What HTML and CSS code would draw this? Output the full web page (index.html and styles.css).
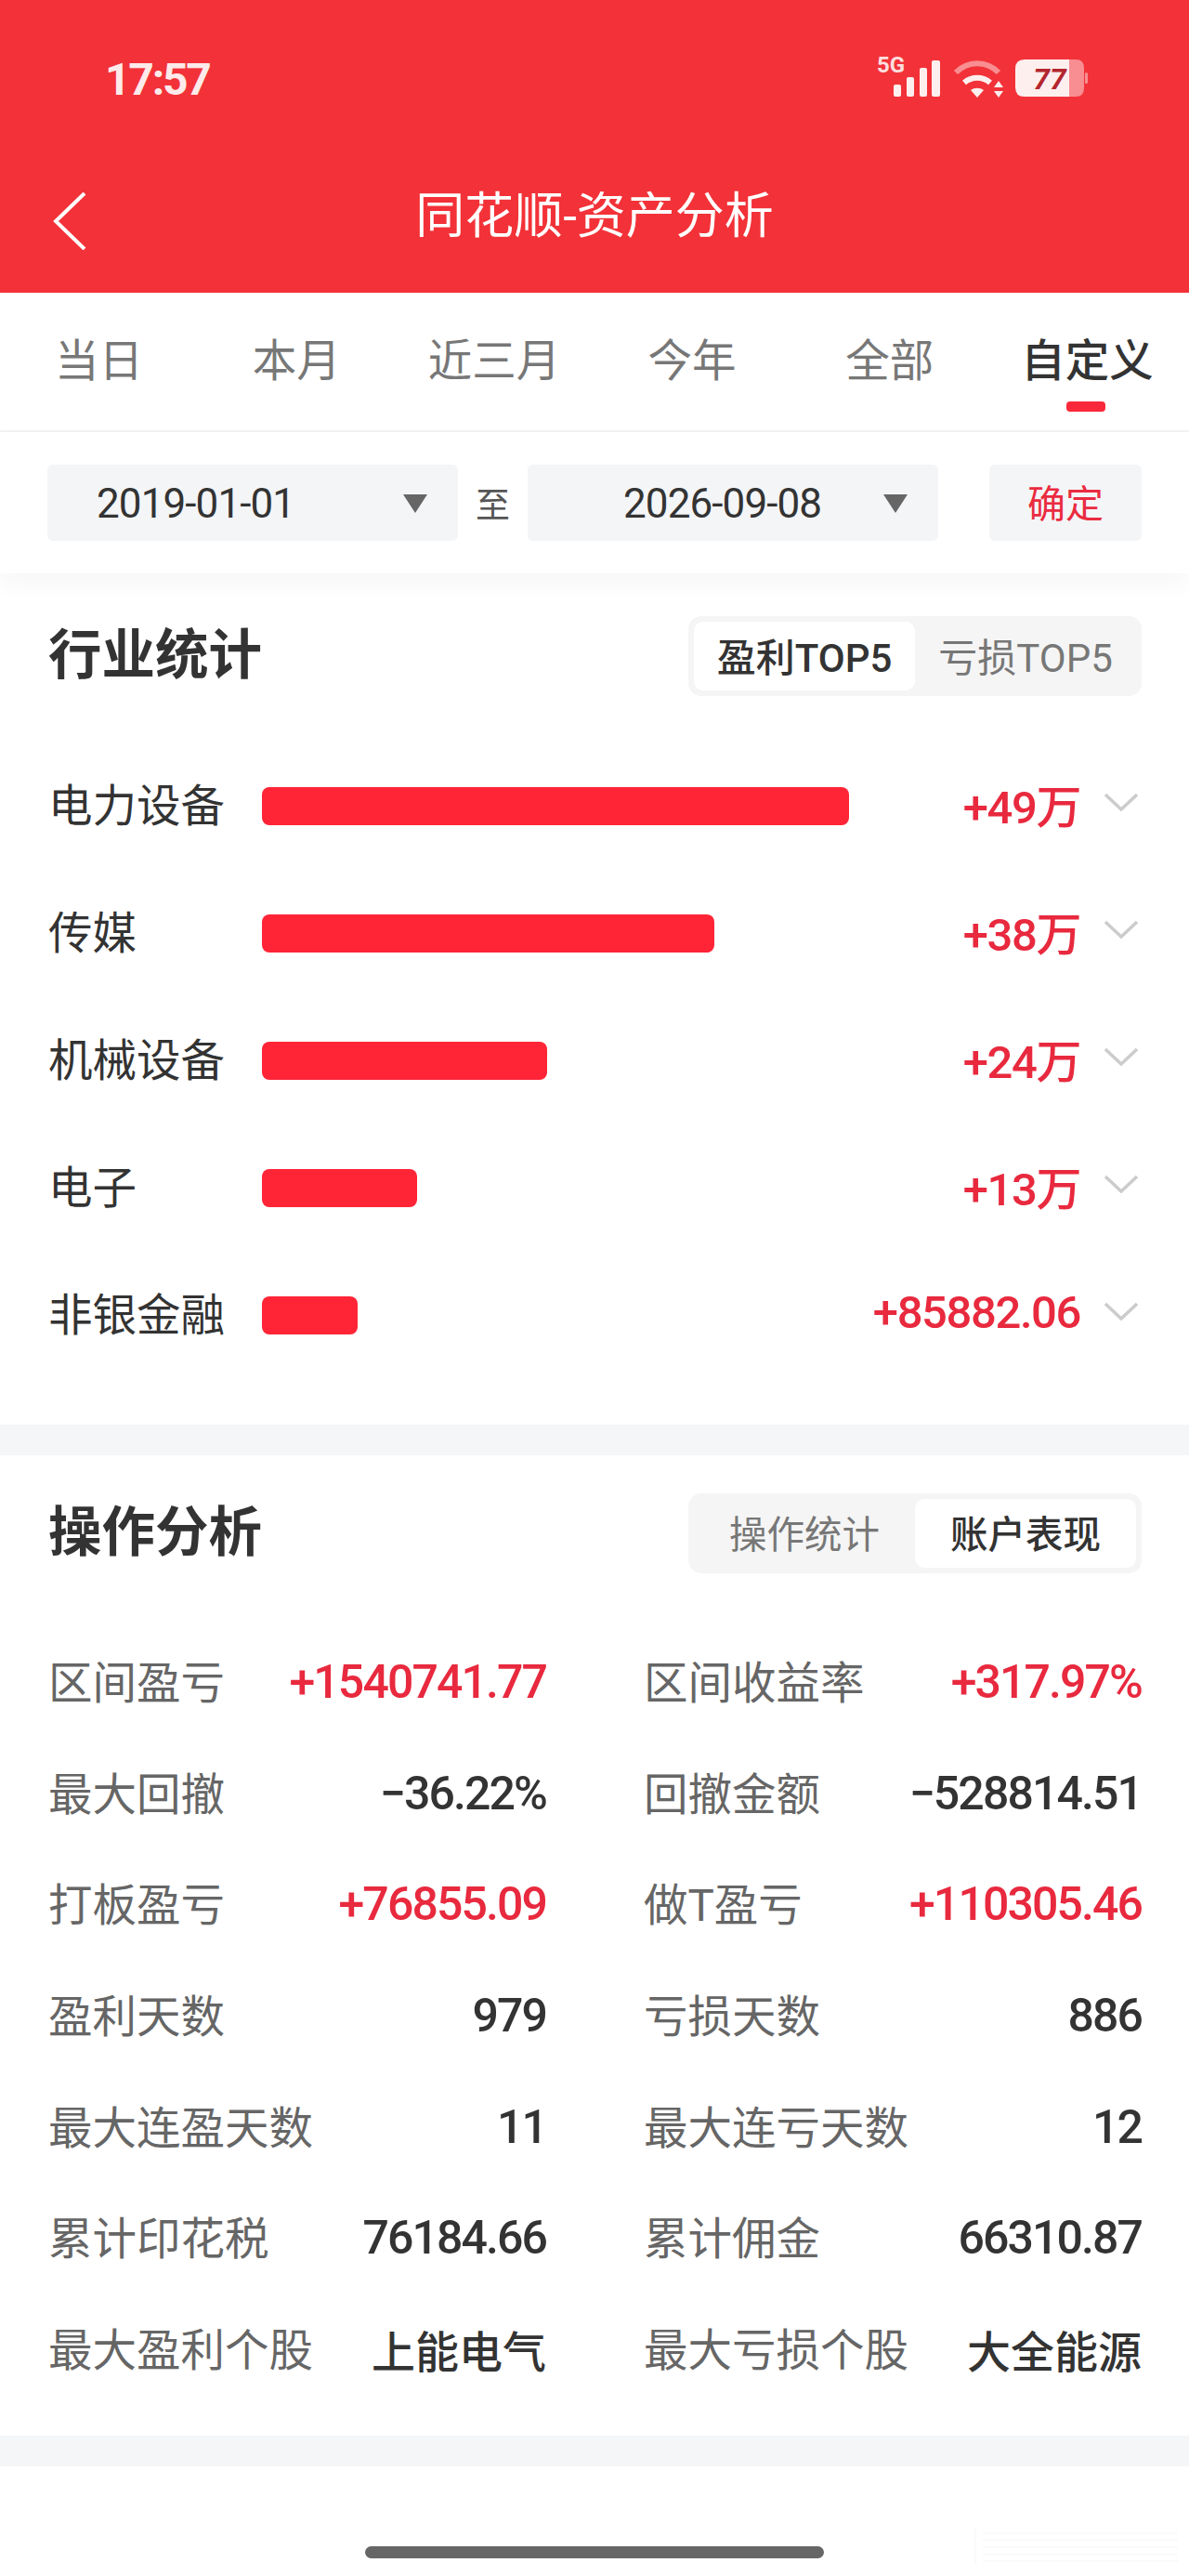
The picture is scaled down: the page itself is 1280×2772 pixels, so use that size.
FILE: index.html
```html
<!DOCTYPE html>
<html>
<head>
  <meta charset="UTF-8">
  <title>同花顺-资产分析</title>
  <link rel="stylesheet" href="styles.css">
</head>
<body>
  <header class="top">
    <div class="status">
      <span class="time">17:57</span>
      <svg class="status-icons" width="232" height="60" viewBox="0 -5 232 60">
        <text x="4" y="18" class="net">5G</text>
        <rect x="22" y="31" width="8" height="13" rx="2" fill="#fff" opacity=".92"/>
        <rect x="36" y="23" width="8" height="21" rx="2" fill="#fff" opacity=".92"/>
        <rect x="50" y="13" width="8" height="31" rx="2" fill="#fff" opacity=".92"/>
        <rect x="63" y="5" width="9" height="39" rx="2" fill="#fff" opacity=".92"/>
        <path d="M89 18 C102 5 122 5 135 18" fill="none" stroke="#fff" stroke-opacity=".45" stroke-width="6"/>
        <path d="M98 29 C106 22 118 22 126 29" fill="none" stroke="#fff" stroke-opacity=".92" stroke-width="6"/>
        <path d="M105 37 C109 34 115 34 119 37 L112 45 Z" fill="#fff" opacity=".92"/>
        <path d="M130 34 L135 27 L140 34 Z M130 38 L135 45 L140 38 Z" fill="#fff" opacity=".92"/>
        <path d="M163 4 H211 V44 H163 Q153 44 153 34 V14 Q153 4 163 4 Z" fill="#fff" opacity=".92"/>
        <path d="M211 4 H218 Q227 4 227 13 V35 Q227 44 218 44 H211 Z" fill="#fff" opacity=".45"/>
        <rect x="228" y="18" width="3" height="12" rx="1.5" fill="#fff" opacity=".45"/>
        <text x="190" y="36" class="batt" text-anchor="middle">77</text>
      </svg>
    </div>
    <div class="titlebar">
      <svg class="back" width="40" height="62" viewBox="0 0 40 62">
        <path d="M36 1 L5 31 L36 61" fill="none" stroke="#fff" stroke-width="4"/>
      </svg>
      <h1>同花顺-资产分析</h1>
    </div>
  </header>

  <nav class="tabs">
    <a>当日</a>
    <a>本月</a>
    <a>近三月</a>
    <a>今年</a>
    <a>全部</a>
    <a class="on">自定义</a>
  </nav>

  <div class="range">
    <div class="date date-a"><span>2019-01-01</span><i class="caret"></i></div>
    <span class="to">至</span>
    <div class="date date-b"><span>2026-09-08</span><i class="caret"></i></div>
    <button class="ok">确定</button>
  </div>

  <section class="industry">
    <div class="head">
      <h2>行业统计</h2>
      <div class="switch">
        <span class="on">盈利TOP5</span>
        <span>亏损TOP5</span>
      </div>
    </div>
    <ul class="bars">
      <li>
        <span class="name">电力设备</span>
        <span class="track"><b class="bar w1"></b></span>
        <span class="amt">+49万</span>
        <svg class="chev" width="36" height="20" viewBox="0 0 36 20"><path d="M1 2 L18 18 L35 2" fill="none" stroke="#ccc" stroke-width="3.5"/></svg>
      </li>
      <li>
        <span class="name">传媒</span>
        <span class="track"><b class="bar w2"></b></span>
        <span class="amt">+38万</span>
        <svg class="chev" width="36" height="20" viewBox="0 0 36 20"><path d="M1 2 L18 18 L35 2" fill="none" stroke="#ccc" stroke-width="3.5"/></svg>
      </li>
      <li>
        <span class="name">机械设备</span>
        <span class="track"><b class="bar w3"></b></span>
        <span class="amt">+24万</span>
        <svg class="chev" width="36" height="20" viewBox="0 0 36 20"><path d="M1 2 L18 18 L35 2" fill="none" stroke="#ccc" stroke-width="3.5"/></svg>
      </li>
      <li>
        <span class="name">电子</span>
        <span class="track"><b class="bar w4"></b></span>
        <span class="amt">+13万</span>
        <svg class="chev" width="36" height="20" viewBox="0 0 36 20"><path d="M1 2 L18 18 L35 2" fill="none" stroke="#ccc" stroke-width="3.5"/></svg>
      </li>
      <li>
        <span class="name">非银金融</span>
        <span class="track"><b class="bar w5"></b></span>
        <span class="amt">+85882.06</span>
        <svg class="chev" width="36" height="20" viewBox="0 0 36 20"><path d="M1 2 L18 18 L35 2" fill="none" stroke="#ccc" stroke-width="3.5"/></svg>
      </li>
    </ul>
  </section>

  <section class="analysis">
    <div class="head">
      <h2>操作分析</h2>
      <div class="switch">
        <span>操作统计</span>
        <span class="on">账户表现</span>
      </div>
    </div>
    <dl class="stats">
      <div><dt>区间盈亏</dt><dd class="up">+1540741.77</dd></div>
      <div><dt>区间收益率</dt><dd class="up">+317.97%</dd></div>
      <div><dt>最大回撤</dt><dd>−36.22%</dd></div>
      <div><dt>回撤金额</dt><dd>−528814.51</dd></div>
      <div><dt>打板盈亏</dt><dd class="up">+76855.09</dd></div>
      <div><dt>做T盈亏</dt><dd class="up">+110305.46</dd></div>
      <div><dt>盈利天数</dt><dd>979</dd></div>
      <div><dt>亏损天数</dt><dd>886</dd></div>
      <div><dt>最大连盈天数</dt><dd>11</dd></div>
      <div><dt>最大连亏天数</dt><dd>12</dd></div>
      <div><dt>累计印花税</dt><dd>76184.66</dd></div>
      <div><dt>累计佣金</dt><dd>66310.87</dd></div>
      <div><dt>最大盈利个股</dt><dd class="stock">上能电气</dd></div>
      <div><dt>最大亏损个股</dt><dd class="stock">大全能源</dd></div>
    </dl>
  </section>

  <div class="home"><span></span></div>

  <svg class="mark" width="240" height="44" viewBox="0 0 240 44">
    <path d="M28 8 H238 M28 15 H238 M28 23 H238 M28 31 H238 M28 38 H238 M20 2 V42" fill="none" stroke="#fafafa" stroke-width="2"/>
  </svg>
</body>
</html>
```

FILE: styles.css
```css
* {
  box-sizing: border-box;
}

html,
body {
  margin: 0;
  padding: 0;
}

body {
  position: relative;
  width: 1280px;
  height: 2772px;
  overflow: hidden;
  background-color: #fff;
  color: #333;
  font-family: Roboto, "Noto Sans CJK SC", sans-serif;
}

.top {
  height: 315px;
  background-color: #f23238;
  color: #fff;
}

.status {
  display: flex;
  justify-content: space-between;
  align-items: center;
  height: 170px;
  padding: 0 108px 0 113px;
}

.time {
  font-size: 48px;
  font-weight: 700;
  letter-spacing: -2.2px;
  opacity: 0.9;
}

.net {
  font-family: Roboto, sans-serif;
  font-size: 24px;
  font-weight: 700;
  fill: #fff;
  fill-opacity: 0.85;
}

.batt {
  font-family: Roboto, sans-serif;
  font-size: 32px;
  font-weight: 700;
  font-style: italic;
  fill: #b3262e;
}

.titlebar {
  display: flex;
  justify-content: center;
  align-items: center;
  position: relative;
  height: 90px;
  margin-top: 18px;
}

.titlebar h1 {
  margin: 0;
  font-size: 53px;
  font-weight: 400;
  line-height: 1;
}

.back {
  position: absolute;
  left: 55px;
  top: 19px;
}

.tabs {
  display: flex;
  height: 150px;
  padding-right: 3px;
  border-bottom: 2px solid #f2f2f2;
}

.tabs a {
  flex: 1;
  position: relative;
  padding-top: 44px;
  text-align: center;
  font-size: 47.5px;
  line-height: 60px;
  color: #777;
}

.tabs a.on {
  color: #333;
  font-weight: 500;
}

.tabs a.on::after {
  content: "";
  position: absolute;
  left: 84px;
  bottom: 20px;
  width: 42px;
  height: 11px;
  border-radius: 4px;
  background-color: #f9283a;
}

.range {
  display: flex;
  align-items: center;
  height: 152px;
  padding: 0 51px;
  position: relative;
  background-color: #fff;
  box-shadow: 0 12px 24px rgba(0, 0, 0, 0.035);
}

.date {
  display: flex;
  align-items: center;
  justify-content: space-between;
  width: 442px;
  height: 82px;
  padding-top: 2px;
  border-radius: 6px;
  background-color: #f4f5f7;
  font-size: 44px;
  letter-spacing: -0.9px;
  color: #333;
}

.date-a {
  padding-left: 53px;
  padding-right: 33px;
}

.date-b {
  padding-left: 103px;
  padding-right: 33px;
}

.caret {
  width: 0;
  height: 0;
  border-left: 13px solid transparent;
  border-right: 13px solid transparent;
  border-top: 20px solid #666;
}

.to {
  width: 75px;
  text-align: center;
  font-size: 37px;
  color: #555;
}

.ok {
  width: 164px;
  height: 82px;
  margin-left: auto;
  padding-bottom: 5px;
  border: none;
  border-radius: 6px;
  background-color: #f4f5f7;
  color: #ea2b40;
  font-family: inherit;
  font-size: 41px;
}

.head {
  display: flex;
  justify-content: space-between;
  align-items: center;
  padding: 0 51px 0 52px;
}

.head h2 {
  margin: 0;
  font-size: 57.5px;
  font-weight: 700;
  line-height: 1;
}

.switch {
  display: flex;
  width: 488px;
  height: 86px;
  padding: 6px;
  border-radius: 14px;
  background-color: #f5f5f5;
  font-size: 42px;
  color: #777;
}

.switch span {
  flex: 1;
  display: flex;
  justify-content: center;
  align-items: center;
  padding-bottom: 3px;
  border-radius: 10px;
}

.switch .on {
  background-color: #fff;
  color: #333;
  font-weight: 500;
}

.analysis .switch {
  font-size: 40.5px;
}

.industry {
  height: 916px;
  padding-top: 46px;
}

.bars {
  list-style: none;
  margin: 47px 0 0;
  padding: 0 55px 0 52px;
}

.bars li {
  display: flex;
  align-items: center;
  height: 137px;
}

.name {
  width: 230px;
  margin-bottom: 2px;
  font-size: 47.5px;
  color: #333;
}

.track {
  display: block;
  width: 660px;
  flex: none;
}

.bar {
  display: block;
  height: 41px;
  margin-top: 6px;
  border-radius: 8px;
  background-color: #ff2537;
}

.w1 { width: 632px; }
.w2 { width: 487px; }
.w3 { width: 307px; }
.w4 { width: 167px; }
.w5 { width: 103px; }

.amt {
  flex: 1;
  margin-right: 26px;
  text-align: right;
  white-space: nowrap;
  font-size: 49px;
  font-weight: 500;
  letter-spacing: -1.4px;
  color: #e8293e;
}

.bars li:last-child .track {
  width: 500px;
}

.chev {
  flex: none;
  margin-top: -4px;
}

.analysis {
  height: 1121px;
  padding-top: 41px;
  border-top: 33px solid #f5f6f7;
  border-bottom: 33px solid #f5f6f7;
}

.stats {
  display: grid;
  grid-template-columns: 536px 536px;
  justify-content: space-between;
  margin: 57px 51px 0 52px;
}

.stats div {
  display: flex;
  justify-content: space-between;
  align-items: center;
  height: 119.7px;
}

.stats dt {
  margin-bottom: 5px;
  font-size: 47.5px;
  color: #666;
}

.stats dd {
  margin: 0;
  font-size: 50px;
  font-weight: 500;
  letter-spacing: -1.9px;
  color: #333;
}

.stats dd.up {
  color: #e8293e;
}

.stats dd.stock {
  font-size: 47px;
  letter-spacing: 0;
}

.home {
  position: absolute;
  left: 0;
  right: 0;
  top: 2740px;
  display: flex;
  justify-content: center;
}

.home span {
  width: 494px;
  height: 13px;
  border-radius: 7px;
  background-color: #666;
}

.mark {
  position: absolute;
  left: 1030px;
  top: 2718px;
}
```
